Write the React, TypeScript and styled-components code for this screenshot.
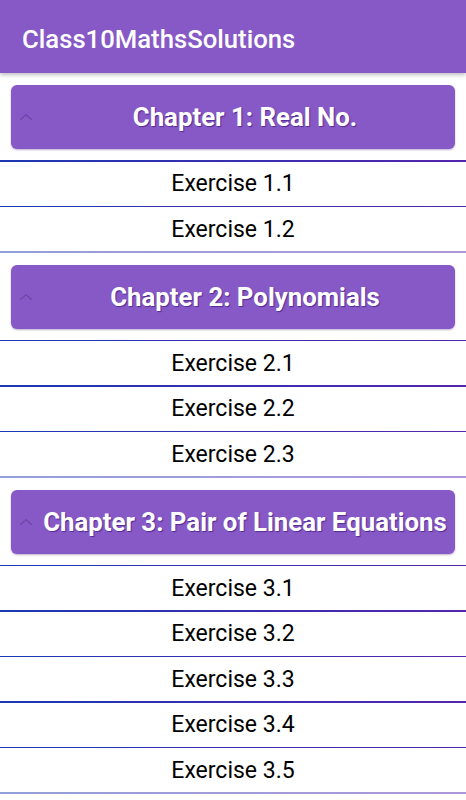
import styled, { createGlobalStyle } from 'styled-components'

const GlobalStyle = createGlobalStyle`
  html, body {
    margin: 0;
    padding: 0;
    background: #ffffff;
    font-family: Roboto, "Noto Sans", sans-serif;
  }
`

const Page = styled.div`
  width: 466px;
  min-height: 800px;
  overflow: hidden;
`

const AppBar = styled.header`
  height: 73px;
  background-color: #8759c7;
  display: flex;
  align-items: center;
  padding-left: 22px;
  padding-top: 4px;
  box-sizing: border-box;
  box-shadow: 0 2px 4px rgba(0, 0, 0, 0.25);
  position: relative;
  z-index: 1;
`

const AppTitle = styled.h1`
  margin: 0;
  color: #ffffff;
  font-size: 25.7px;
  font-weight: 500;
`

const Section = styled.section`
  display: flex;
  flex-direction: column;
`

const ChapterCard = styled.div`
  margin: 12px 11px 11px;
  height: 64px;
  border-radius: 6px;
  background-color: #8759c7;
  box-shadow: 0 1px 2px rgba(60, 20, 120, 0.35);
  display: flex;
  align-items: center;
  padding-left: 6px;
`

const Chevron = styled.svg`
  width: 18px;
  height: 18px;
  flex: none;
  opacity: 0.55;
`

const ChapterTitle = styled.h2`
  flex: 1;
  margin: 0;
  text-align: center;
  color: #ffffff;
  font-size: 25.8px;
  font-weight: 700;
  white-space: nowrap;
  text-shadow: 1px 1px 1px rgba(50, 10, 110, 0.6);
`

const Divider = styled.div<{ $tone: number }>`
  height: 1.5px;
  background: linear-gradient(
    to right,
    rgba(15, 45, 175, ${p => p.$tone}),
    rgba(75, 25, 170, ${p => p.$tone})
  );
`

const ExerciseRow = styled.div`
  height: 44px;
  display: flex;
  align-items: center;
  justify-content: center;
  font-size: 23px;
  color: #000000;
`

const chapters = [
  { title: 'Chapter 1: Real No.', exercises: ['1.1', '1.2'] },
  { title: 'Chapter 2: Polynomials', exercises: ['2.1', '2.2', '2.3'] },
  { title: 'Chapter 3: Pair of Linear Equations', exercises: ['3.1', '3.2', '3.3', '3.4', '3.5'] },
]

function ChevronUp() {
  return (
    <Chevron viewBox="0 0 24 24" fill="none" stroke="#5a3a90" strokeWidth="2" strokeLinecap="round" strokeLinejoin="round">
      <path d="M5 15l7-6 7 6" />
    </Chevron>
  )
}

export default function App() {
  return (
    <Page>
      <GlobalStyle />
      <AppBar>
        <AppTitle>Class10MathsSolutions</AppTitle>
      </AppBar>
      {chapters.map(ch => (
        <Section key={ch.title}>
          <ChapterCard>
            <ChevronUp />
            <ChapterTitle>{ch.title}</ChapterTitle>
          </ChapterCard>
          {ch.exercises.map(ex => (
            <div key={ex}>
              <Divider $tone={0.95} />
              <ExerciseRow>Exercise {ex}</ExerciseRow>
            </div>
          ))}
          <Divider $tone={0.45} />
        </Section>
      ))}
    </Page>
  )
}
